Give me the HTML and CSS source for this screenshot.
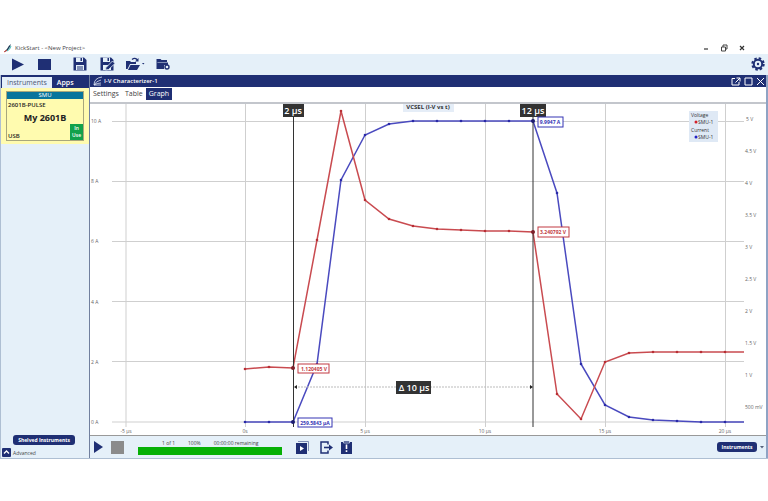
FILE: index.html
```html
<!DOCTYPE html>
<html lang="en">
<head>
<meta charset="UTF-8">
<title>KickStart - &lt;New Project&gt;</title>
<link rel="stylesheet" href="styles.css">
</head>
<body>
<div class="window">

<header class="titlebar">
  <svg class="logo" width="10" height="10" viewBox="0 0 10 10"><path d="M1 9Q6 8 8 1Q5 3 4 6Z" fill="#1b3a56"/><path d="M4 8Q7 7 8 3" fill="none" stroke="#3fb5b0"/><path d="M1 9l3-2" stroke="#d6453d"/></svg>
  <span>KickStart - &lt;New Project&gt;</span>
  <div class="wincontrols">
    <button aria-label="Minimize"><svg width="8" height="8" viewBox="0 0 8 8"><path d="M2 5H6" stroke="#444" stroke-width="1.3"/></svg></button>
    <button aria-label="Restore"><svg width="8" height="8" viewBox="0 0 8 8"><path d="M1.500 3h4v4h-4zM3 3V1h4v4H5.500" fill="none" stroke="#444"/></svg></button>
    <button aria-label="Close"><svg width="8" height="8" viewBox="0 0 8 8"><path d="M2 2l4 4M6 2l-4 4" stroke="#333" stroke-width="1.200"/></svg></button>
  </div>
</header>

<nav class="toolbar">
  <button class="run" aria-label="Run"><svg width="12" height="13" viewBox="0 0 12 13"><path d="M0 0.500L12 6.500L0 12.500z" fill="#1f2f74"/></svg></button>
  <button class="halt" aria-label="Stop"><svg width="14" height="13" viewBox="0 0 14 13"><path d="M0 1h13v11H0z" fill="#1f2f74"/></svg></button>
  <button class="save" aria-label="Save"><svg width="14" height="14" viewBox="0 0 14 14"><path d="M0.500 0.500H11L13.500 3V13.500H0.500z" fill="#1f2f74"/><path d="M3 0.500h7v4.500H3zM3 8h8v5H3z" fill="#e5f0f9"/><path d="M7.500 1h1.500v3H7.500zM4 9.500h6v1H4zM4 11.500h6v1H4z" fill="#1f2f74"/></svg></button>
  <button class="saveas" aria-label="Save as"><svg width="15" height="14" viewBox="0 0 15 14"><path d="M0.500 0.500H11L13.500 3V13.500H0.500z" fill="#1f2f74"/><path d="M3 0.500h7v4.500H3zM3 8h8v5H3z" fill="#e5f0f9"/><path d="M7.500 1h1.500v3H7.500z" fill="#1f2f74"/><path d="M5.500 13L6 10.500L12.500 4L15 6.500L8.500 12.500z" fill="#1f2f74" stroke="#e5f0f9" stroke-width=".8"/></svg></button>
  <button class="open" aria-label="Open"><svg width="19" height="14" viewBox="0 0 19 14"><path d="M0 12V4h4l1 1h5v2H4L1.500 12zM4.500 8H14L11 13H2z" fill="#1f2f74"/><path d="M6 2.500Q9 0 11.500 3" fill="none" stroke="#1f2f74" stroke-width="1.300"/><path d="M12.500 1v3.500H9z" fill="#1f2f74"/><path d="M16 6h2.500l-1.250 1.500z" fill="#1f2f74"/></svg></button>
  <button aria-label="Project folder"><svg width="14" height="12" viewBox="0 0 14 12"><path d="M0.500 1h4l1 1H11v2H1.500v6H0.500zM2 4.500h10V7H8v4H0.500V5z" fill="#1f2f74"/><circle cx="11" cy="9" r="2" fill="#e5f0f9" stroke="#1f2f74" stroke-width="1.400"/></svg></button>
  <button class="settings" aria-label="Settings"><svg width="14" height="14" viewBox="0 0 14 14"><circle cx="7" cy="7" r="5.700" fill="none" stroke="#1f2f74" stroke-width="2" stroke-dasharray="2.500 1.977"/><circle cx="7" cy="7" r="4.200" fill="none" stroke="#1f2f74" stroke-width="2"/><circle cx="7" cy="7" r="1.200" fill="#1f2f74"/></svg></button>
</nav>

<div class="main">
<aside class="sidebar">
  <div class="sidetabs">
    <button class="on">Instruments</button>
    <button>Apps</button>
  </div>
  <div class="selected">
    <div class="card">
      <div class="cardtop">SMU</div>
      <div class="model">2601B-PULSE</div>
      <div class="name">My 2601B</div>
      <div class="cardfoot"><span>USB</span><span class="inuse">In<br>Use</span></div>
    </div>
  </div>
  <button class="pill shelved">Shelved Instruments</button>
  <button class="advanced"><svg width="9" height="9" viewBox="0 0 9 9"><rect width="9" height="9" rx="1" fill="#1f2f74"/><path d="M2 5.500L4.500 3L7 5.500" fill="none" stroke="#fff" stroke-width="1.300"/></svg>Advanced</button>
</aside>

<section class="app">
  <div class="apptitle">
    <svg width="10" height="10" viewBox="0 0 10 10"><path d="M1 9Q1 2 9 1M1 9Q3 5 8 4M1 9Q4 7 8 7M1 9H8" fill="none" stroke="#dfe6f5" stroke-width=".8"/></svg>
    <h1>I-V Characterizer-1</h1>
    <div class="appbuttons">
      <button aria-label="Pop out"><svg width="10" height="9" viewBox="0 0 10 9"><path d="M4 1.500H1V8h7V5M5.500 1H9v3.500M9 1L4.500 5.500" fill="none" stroke="#fff"/></svg></button>
      <button aria-label="Maximize"><svg width="9" height="9" viewBox="0 0 9 9"><path d="M1 1h7v7H1z" fill="none" stroke="#fff"/></svg></button>
      <button aria-label="Close app"><svg width="9" height="9" viewBox="0 0 9 9"><path d="M1 1l7 7M8 1l-7 7" stroke="#fff"/></svg></button>
    </div>
  </div>
  <div class="tabs">
    <button>Settings</button>
    <button>Table</button>
    <button class="on">Graph</button>
  </div>
  <div class="chart">
  <svg viewBox="90 104 676 331" role="img" aria-label="VCSEL (I-V vs t)">
    <!-- grid -->
    <path class="grid" d="M112 121.500H744M112 181.500H744M112 241.500H744M112 301.500H744M112 361.500H744M112 422H744"/>
    <path class="grid" d="M126 104V427M245.500 104V427M365.500 104V427M485.500 104V427M605.500 104V427M725.500 104V427"/>
    <!-- axis labels -->
    <g class="axis">
      <text x="91" y="123">10 A</text><text x="91" y="183">8 A</text><text x="91" y="243">6 A</text>
      <text x="91" y="304">4 A</text><text x="91" y="364">2 A</text><text x="91" y="424">0 A</text>
      <text x="746" y="121">5 V</text><text x="745" y="153">4.5 V</text><text x="745" y="185">4 V</text>
      <text x="745" y="217">3.5 V</text><text x="745" y="249">3 V</text><text x="745" y="281">2.5 V</text>
      <text x="745" y="313">2 V</text><text x="745" y="345">1.5 V</text><text x="745" y="377">1 V</text>
      <text x="745" y="409">500 mV</text>
      <g text-anchor="middle">
        <text x="126" y="433">-5 µs</text><text x="245" y="433">0s</text><text x="365" y="433">5 µs</text>
        <text x="485" y="433">10 µs</text><text x="605" y="433">15 µs</text><text x="725" y="433">20 µs</text>
      </g>
    </g>
    <!-- markers used on both traces -->
    <defs>
      <marker id="dotb" markerUnits="userSpaceOnUse" markerWidth="4" markerHeight="4" refX="2" refY="2"><circle cx="2" cy="2" r="1.300" fill="#2a2aa8"/></marker>
      <marker id="dotr" markerUnits="userSpaceOnUse" markerWidth="4" markerHeight="4" refX="2" refY="2"><circle cx="2" cy="2" r="1.300" fill="#b82f35"/></marker>
    </defs>
    <polyline class="current" points="245,422 269,422 293,422 317,364 341,180 365,135 389,124 413,121 437,121 461,121 485,121 509,121 533,121 557,193 581,364 605,405 629,417 653,420 677,421 701,422 725,422 744,422"/>
    <polyline class="voltage" points="245,369 269,367 293,368 317,240 341,111 365,200 389,219 413,226 437,229 461,230 485,231 509,231 533,232 557,394 581,419 605,362 629,353 653,352 677,352 701,352 725,352 744,352"/>
    <!-- cursors -->
    <path class="cursor" d="M293.500 116V427M533 116V427"/>
    <path class="delta" d="M295 387H532"/>
    <path d="M294 387l3-2v4zM533 387l-3-2v4z" fill="#222"/>
    <circle cx="293" cy="368" r="2" fill="#7d1f2a"/><circle cx="533" cy="232" r="2" fill="#7d1f2a"/>
    <circle cx="293" cy="422" r="2" fill="#1c1c70"/><circle cx="533" cy="121" r="2" fill="#1c1c70"/>
    <g class="flag">
      <rect x="283" y="104" width="21" height="13"/><text x="293" y="114">2 µs</text>
      <rect x="520" y="104" width="26" height="13"/><text x="533" y="114">12 µs</text>
      <rect x="396" y="381" width="35" height="13"/><text x="414" y="391">Δ 10 µs</text>
    </g>
    <g class="value red">
      <rect x="298" y="364" width="31" height="9"/><text x="314" y="371">1.120405 V</text>
      <rect x="538" y="227" width="31" height="10"/><text x="553" y="234">3.240792 V</text>
    </g>
    <g class="value blue">
      <rect x="298" y="418" width="34" height="9"/><text x="315" y="425">259.5843 µA</text>
      <rect x="538" y="117" width="25" height="10"/><text x="550" y="124">9.9947 A</text>
    </g>
    <!-- title and legend -->
    <rect x="403" y="102" width="51" height="10" fill="#e5edf7"/>
    <text class="charttitle" x="428" y="109">VCSEL (I-V vs t)</text>
    <rect x="689" y="111" width="29" height="31" fill="#dfe9f5"/>
    <g class="legend">
      <text x="691" y="117">Voltage</text><circle cx="696" cy="122" r="1.500" fill="#d3202a"/><text x="698" y="124">SMU-1</text>
      <text x="691" y="132">Current</text><circle cx="696" cy="137" r="1.500" fill="#2320c4"/><text x="698" y="139">SMU-1</text>
    </g>
  </svg>
  </div>
  <footer class="status">
    <button aria-label="Run test"><svg width="9" height="12" viewBox="0 0 9 12"><path d="M0 0L9 6L0 12z" fill="#1f2f74"/></svg></button>
    <button aria-label="Stop test" class="stop"></button>
    <div class="progress">
      <div class="progresstext"><span>1 of 1</span><span>100%</span><span>00:00:00 remaining</span></div>
      <div class="bar"></div>
    </div>
    <button aria-label="Run queue" class="queue"><svg width="14" height="13" viewBox="0 0 14 13"><path d="M2 0.500H12.500V10" fill="none" stroke="#8290b8"/><path d="M0 2h11v11H0z" fill="#1f2f74"/><path d="M4 5l4 2.500L4 10z" fill="#fff"/></svg></button>
    <button aria-label="Export" class="export"><svg width="13" height="13" viewBox="0 0 13 13"><path d="M8 3.500V1H1v11h7V9.500" fill="none" stroke="#1f2f74" stroke-width="1.500"/><path d="M4 6.500h6" stroke="#1f2f74" stroke-width="1.600"/><path d="M9 3.500L13 6.500L9 9.500z" fill="#1f2f74"/></svg></button>
    <button aria-label="Event log"><svg width="11" height="13" viewBox="0 0 11 13"><path d="M0 1h11v12H0z" fill="#1f2f74"/><path d="M2.500 0h6v2h-6z" fill="#1f2f74" stroke="#e5f0f9" stroke-width=".7"/><path d="M5.500 3.500v4.500M5.500 9.300v1.700" stroke="#fff" stroke-width="1.600"/></svg></button>
    <button class="pill instruments">Instruments</button>
    <svg width="4" height="4" viewBox="0 0 4 4"><path d="M0 1h4L2 3.500z" fill="#56627c"/></svg>
  </footer>
</section>
</div>

</div>
</body>
</html>
```
FILE: styles.css
```css
body {
	margin:0;
	padding-top:42px;
	background-color:#fff;
	color:#444;
	font-family:"Open Sans", "Noto Sans", sans-serif;
	font-size:6px;
	line-height:8px;
}

* {
	box-sizing:border-box;
}

button {
	display:flex;
	align-items:center;
	border:0;
	padding:0;
	background:none;
	color:inherit;
	font:inherit;
}

svg {
	display:block;
	flex:none;
}

.titlebar
{
	display:flex;
	align-items:center;
	height:12px;
	padding:0 22px 0 3px;
	gap:2px;
}

.wincontrols
{
	display:flex;
	gap:10px;
	margin-left:auto;
}

.toolbar
{
	display:flex;
	align-items:center;
	height:21px;
	padding:0 3px 1px 12px;
	background-color:#e5f0f9;
}

.run { margin-right:14px; }
.halt { margin-right:21px; }
.save { margin-right:13px; }
.saveas { margin-right:11px; }
.open { margin-right:11px; }
.settings { margin-left:auto; }

.main
{
	display:flex;
	border-bottom:1px solid #aebfd3;
}

.sidebar
{
	display:flex;
	flex-direction:column;
	flex:none;
	width:89px;
	border-left:1px solid #aebfd3;
	background-color:#e5f0f9;
}

.sidetabs
{
	display:flex;
	height:13px;
	padding:2px 1px 0;
	background-color:#1f2f74;
	color:#fff;
	font-size:7px;
}

.sidetabs button
{
	padding:0 5px;
	font-weight:600;
}

.sidetabs .on
{
	background-color:#e5f0f9;
	color:#4c5874;
	font-weight:normal;
}

.selected
{
	padding:3px 5px;
	background-color:#fffbaf;
}

.card
{
	border:1px solid #a8a77c;
	color:#222;
	font-weight:600;
}

.cardtop
{
	background-color:#08759c;
	color:#fff;
	text-align:center;
	line-height:7px;
	font-weight:normal;
}

.model
{
	padding:2px 1px 0;
}

.name
{
	padding-top:3px;
	font-size:9px;
	font-weight:bold;
	line-height:12px;
	text-align:center;
}

.cardfoot
{
	display:flex;
	justify-content:space-between;
	align-items:flex-end;
	padding-left:1px;
}

.inuse
{
	width:13px;
	padding:1px 0;
	background-color:#12a14b;
	color:#fff;
	font-size:5px;
	line-height:7px;
	text-align:center;
}

.pill
{
	justify-content:center;
	height:10px;
	border-radius:3px;
	background-color:#1f2f74;
	color:#fff;
	font-size:5px;
	font-weight:bold;
}

.shelved
{
	width:62px;
	margin:auto auto 3px 12px;
}

.advanced
{
	gap:2px;
	margin:0 1px 1px;
	font-size:5px;
}

.app
{
	flex:1;
	min-width:0;
	border-left:1px solid #71809f;
	border-right:2px solid #8fa3c4;
	background-color:#fff;
}

.apptitle
{
	display:flex;
	align-items:center;
	height:12px;
	padding:0 1px 0 3px;
	gap:1px;
	background-color:#1f2f74;
	color:#fff;
}

.apptitle h1
{
	margin:0;
	font-size:6px;
	font-weight:600;
}

.appbuttons
{
	display:flex;
	gap:3px;
	margin-left:auto;
}

.tabs
{
	display:flex;
	height:15px;
	padding:1px 0 2px;
	font-size:7px;
}

.tabs button
{
	padding:0 3px;
}

.tabs .on
{
	background-color:#1f2f74;
	color:#fff;
}

.chart
{
	border-top:2px solid #c3c6cc;
	border-bottom:1px solid #999;
}

.chart svg
{
	width:100%;
	height:auto;
	overflow:hidden;
}

.grid
{
	fill:none;
	stroke:#cfcfcf;
}

.axis
{
	fill:#666;
	font-size:5px;
}

.current, .voltage
{
	fill:none;
	stroke-width:1.5px;
}

.current
{
	stroke:#4a4abf;
	marker-start:url(#dotb);
	marker-mid:url(#dotb);
}

.voltage
{
	stroke:#c94b50;
	marker-start:url(#dotr);
	marker-mid:url(#dotr);
}

.cursor
{
	stroke:#333;
}

.delta
{
	stroke:#bbb;
	stroke-dasharray:2 1;
}

.flag
{
	fill:#fff;
	font-size:9px;
	font-weight:600;
	text-anchor:middle;
}

.flag rect
{
	fill:#333;
}

.value
{
	font-size:5px;
	font-weight:bold;
	text-anchor:middle;
}

.value rect
{
	fill:#fff;
	stroke:currentColor;
}

.value text
{
	fill:currentColor;
}

.red { color:#c23a42; }
.blue { color:#3434b4; }

.charttitle
{
	fill:#333;
	font-size:6px;
	font-weight:bold;
	text-anchor:middle;
}

.legend
{
	fill:#333;
	font-size:5px;
}

.status
{
	display:flex;
	align-items:center;
	height:22px;
	padding:0 2px 0 4px;
	background-color:#e5f0f9;
}

.stop
{
	width:13px;
	height:13px;
	margin:0 14px 0 8px;
	background-color:#8b8b8b;
}

.progress
{
	width:144px;
	margin-right:14px;
}

.progresstext
{
	display:flex;
	gap:13px;
	padding-left:24px;
	font-size:5px;
	white-space:nowrap;
}

.bar
{
	height:8px;
	background-color:#06b006;
}

.queue { margin-right:10px; }
.export { margin-right:8px; }

.instruments
{
	width:40px;
	margin:0 3px 0 auto;
}
```
